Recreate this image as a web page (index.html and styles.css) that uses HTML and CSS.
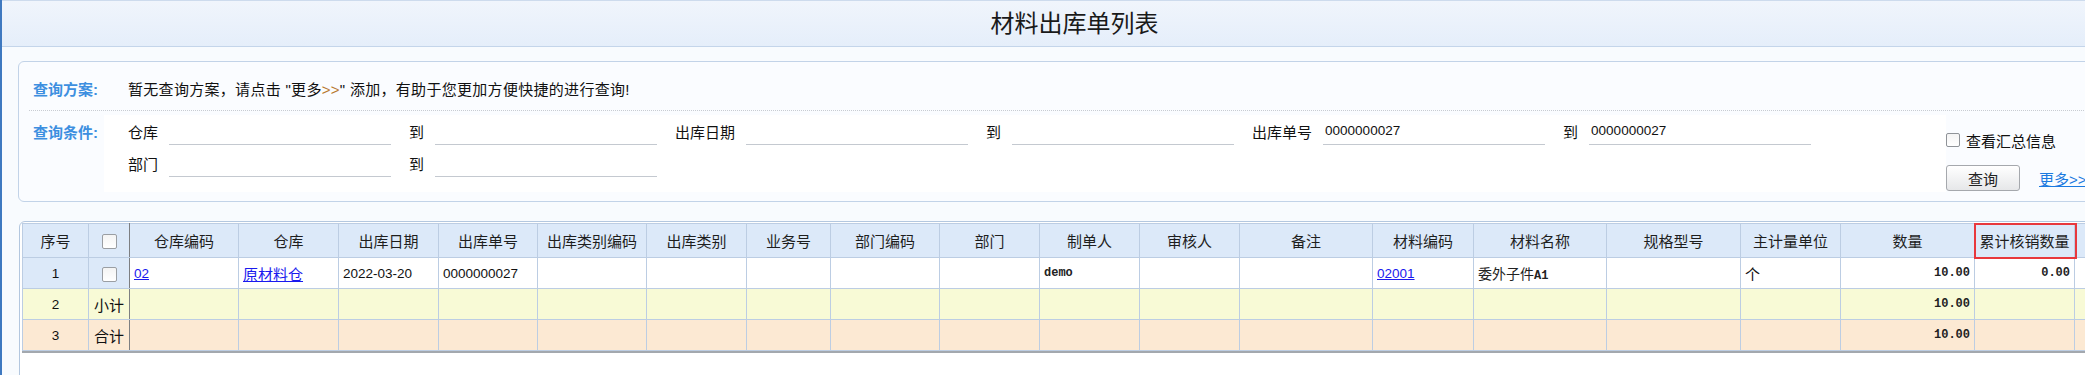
FILE: index.html
```html
<!DOCTYPE html>
<html lang="zh-CN">
  <head>
    <meta charset="UTF-8" />
    <title>材料出库单列表</title>
    <link rel="stylesheet" href="styles.css">
  </head>
  <body>
    <div class="frame">
      <!-- Title bar -->
      <div class="titlebar">材料出库单列表</div>

      <!-- Query panel -->
      <div class="query">
        <div class="plan-row">
          <span class="q-label">查询方案:</span>
          <span class="plan-text">暂无查询方案，请点击 "更多<span class="arrows">&gt;&gt;</span>" 添加，有助于您更加方便快捷的进行查询!</span>
        </div>

        <div class="cond-row">
          <span class="q-label cond-label">查询条件:</span>
          <div class="cond-grid">
            <span class="f-label">仓库</span>
            <input class="f-input" type="text" value="" />
            <span class="f-to">到</span>
            <input class="f-input" type="text" value="" />
            <span class="f-label">出库日期</span>
            <input class="f-input" type="text" value="" />
            <span class="f-to">到</span>
            <input class="f-input" type="text" value="" />
            <span class="f-label">出库单号</span>
            <input class="f-input" type="text" value="0000000027" />
            <span class="f-to">到</span>
            <input class="f-input" type="text" value="0000000027" />

            <span class="f-label">部门</span>
            <input class="f-input" type="text" value="" />
            <span class="f-to">到</span>
            <input class="f-input" type="text" value="" />
          </div>
          <div class="cond-side">
            <label class="sum-check"><span class="chk"></span>查看汇总信息</label>
            <div class="side-actions">
              <button class="btn-query" type="button">查询</button>
              <a class="more-link" href="#">更多&gt;&gt;</a>
            </div>
          </div>
        </div>
      </div>

      <!-- Result grid -->
      <div class="grid-box">
        <table class="list">
          <colgroup>
            <col class="w66" /><col class="w41" /><col class="w109" /><col class="w100" />
            <col class="w100" /><col class="w99" /><col class="w109" /><col class="w100" />
            <col class="w84" /><col class="w109" /><col class="w100" /><col class="w100" />
            <col class="w100" /><col class="w133" /><col class="w101" /><col class="w133" />
            <col class="w134" /><col class="w100" /><col class="w134" /><col class="w100" />
            <col class="w100" />
          </colgroup>
          <thead>
            <tr>
              <th>序号</th>
              <th class="sep"><span class="chk cell-chk"></span></th>
              <th>仓库编码</th>
              <th>仓库</th>
              <th>出库日期</th>
              <th>出库单号</th>
              <th>出库类别编码</th>
              <th>出库类别</th>
              <th>业务号</th>
              <th>部门编码</th>
              <th>部门</th>
              <th>制单人</th>
              <th>审核人</th>
              <th>备注</th>
              <th>材料编码</th>
              <th>材料名称</th>
              <th>规格型号</th>
              <th>主计量单位</th>
              <th>数量</th>
              <th class="marked">累计核销数量</th>
              <th></th>
            </tr>
          </thead>
          <tbody>
            <tr class="row-data">
              <td class="idx num">1</td>
              <td class="idx sep"><span class="chk cell-chk"></span></td>
              <td class="num"><a href="#">02</a></td>
              <td><a href="#">原材料仓</a></td>
              <td class="num">2022-03-20</td>
              <td class="num">0000000027</td>
              <td></td>
              <td></td>
              <td></td>
              <td></td>
              <td></td>
              <td class="mono">demo</td>
              <td></td>
              <td></td>
              <td class="num"><a href="#">02001</a></td>
              <td class="mono"><span class="cj">委外子件</span>A1</td>
              <td></td>
              <td>个</td>
              <td class="mono right">10.00</td>
              <td class="mono right">0.00</td>
              <td></td>
            </tr>
            <tr class="row-sub">
              <td class="num center">2</td>
              <td class="center sep">小计</td>
              <td></td><td></td><td></td><td></td><td></td><td></td><td></td>
              <td></td><td></td><td></td><td></td><td></td><td></td><td></td>
              <td></td><td></td>
              <td class="mono right">10.00</td>
              <td></td><td></td>
            </tr>
            <tr class="row-total">
              <td class="num center">3</td>
              <td class="center sep">合计</td>
              <td></td><td></td><td></td><td></td><td></td><td></td><td></td>
              <td></td><td></td><td></td><td></td><td></td><td></td><td></td>
              <td></td><td></td>
              <td class="mono right">10.00</td>
              <td></td><td></td>
            </tr>
          </tbody>
        </table>
        <div class="grid-foot"></div>
      </div>
    </div>
  </body>
</html>
```

FILE: styles.css
```css
/* Base */
* {
  margin: 0;
  padding: 0;
  box-sizing: border-box;
}

body {
  font-family: "Liberation Sans", "Noto Sans CJK SC", sans-serif;
  font-size: 15px;
  color: #111;
  background-color: #f8fbfe;
}

a {
  color: #1a1aee;
  text-decoration: underline;
}

.frame {
  height: 375px;
  overflow: hidden;
  border-left: 2px solid #3f79c0;
}

/* Title bar */
.titlebar {
  height: 47px;
  line-height: 45px;
  padding-left: 62px;
  text-align: center;
  font-size: 24px;
  color: #1a1a1a;
  border-top: 1px solid #cddbed;
  border-bottom: 1px solid #c4d5ea;
  background: linear-gradient(#f0f5fc, #e5eefa);
}

/* Query panel */
.query {
  margin: 14px -12px 0 16px;
  height: 141px;
  border: 1px solid #c2d3e8;
  border-radius: 6px;
  background-color: #fafcff;
}

.plan-row {
  display: flex;
  align-items: center;
  margin: 0 10px;
  padding: 16px 0 8px 4px;
  line-height: 24px;
  border-bottom: 1px dotted #c8ccd2;
}

.q-label {
  width: 95px;
  flex: none;
  font-weight: bold;
  color: #3d8fe0;
}

.plan-text {
  letter-spacing: 0.3px;
}

.arrows {
  color: #b8782e;
}

.cond-row {
  display: flex;
  padding: 4px 0 0 14px;
}

.cond-label {
  width: 71px;
  margin-top: 6px;
  line-height: 24px;
}

.cond-grid {
  display: grid;
  grid-template-columns: auto 240px auto 240px auto 240px auto 240px auto 240px auto 240px;
  grid-auto-rows: 32px;
  justify-content: start;
  align-items: center;
  width: 1842px;
  flex: none;
  padding: 0 0 13px 24px;
  background-color: #fff;
}

.f-label {
  padding-right: 11px;
  white-space: nowrap;
}

.f-to {
  padding-right: 11px;
}

.f-input {
  width: 222px;
  height: 28px;
  padding: 0 2px;
  border: none;
  border-bottom: 1px solid #c4c9d0;
  background: transparent;
  font-family: "Liberation Sans", sans-serif;
  font-size: 13.5px;
  color: #111;
}

.cond-side {
  padding-top: 15px;
}

.sum-check {
  display: flex;
  align-items: center;
  gap: 6px;
  height: 20px;
  white-space: nowrap;
}

.chk {
  display: inline-block;
  width: 14px;
  height: 14px;
  border: 1px solid #8f9398;
  border-radius: 2px;
  background: linear-gradient(#f4f4f4, #fff);
}

.side-actions {
  display: flex;
  align-items: center;
  margin-top: 15px;
}

.btn-query {
  width: 74px;
  height: 26px;
  border: 1px solid #a5a8ad;
  border-radius: 3px;
  background: linear-gradient(#ffffff, #e6e7e9);
  font-family: "Liberation Sans", "Noto Sans CJK SC", sans-serif;
  font-size: 15px;
  color: #222;
}

.more-link {
  margin-left: 19px;
  color: #1b7ae0;
  white-space: nowrap;
}

/* Result grid */
.grid-box {
  margin: 19px -20px 0 17px;
  height: 200px;
  padding: 1px 0 0 2px;
  border: 1px solid #b3c7df;
  border-radius: 6px;
  background-color: #fff;
}

.list {
  width: 2152px;
  table-layout: fixed;
  border-collapse: collapse;
}

.w41 { width: 41px; }
.w66 { width: 66px; }
.w84 { width: 84px; }
.w99 { width: 99px; }
.w100 { width: 100px; }
.w101 { width: 101px; }
.w109 { width: 109px; }
.w133 { width: 133px; }
.w134 { width: 134px; }

.list th,
.list td {
  border: 1px solid #bccde3;
  white-space: nowrap;
  overflow: hidden;
}

.list th {
  height: 34px;
  font-weight: normal;
  color: #1e1e1e;
  background-color: #dce9f9;
  text-align: center;
}

.list td {
  height: 31px;
  padding: 0 4px;
}

.list .sep {
  border-right: 1px solid #7d7f82;
  text-align: center;
}

.list .idx {
  background-color: #dce9f9;
  text-align: center;
}

.row-data td {
  background-color: #fff;
}

.row-data td.idx {
  background-color: #dce9f9;
}

.row-sub td {
  background-color: #f8fad6;
}

.row-total td {
  background-color: #fce9d3;
}

.num {
  font-size: 13.5px;
}

.mono {
  font-family: "Liberation Mono", "Noto Sans CJK SC", monospace;
  font-size: 12px;
  font-weight: bold;
  color: #222;
}

.mono .cj {
  font-family: "Noto Sans CJK SC", sans-serif;
  font-size: 14px;
  font-weight: normal;
}

.center {
  text-align: center;
}

.right {
  text-align: right;
}

.cell-chk {
  width: 15px;
  height: 15px;
  vertical-align: middle;
  border-color: #9a9ea3;
}

/* Highlight around one column header */
.list th.marked {
  position: relative;
  overflow: visible;
}

.list th.marked::after {
  content: "";
  position: absolute;
  top: -1px;
  left: -1px;
  right: -3px;
  bottom: -2px;
  border: 2px solid #e8383d;
}

.grid-foot {
  width: 2152px;
  height: 2px;
  background-color: #a3a8ae;
}
```
